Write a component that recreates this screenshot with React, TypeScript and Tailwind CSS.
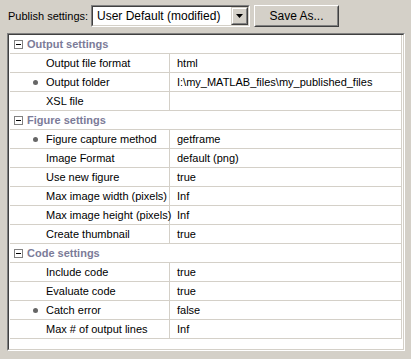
import React from "react";

type Row = { label: string; value: string; dot?: boolean };
type Section = { title: string; rows: Row[] };

const sections: Section[] = [
  {
    title: "Output settings",
    rows: [
      { label: "Output file format", value: "html" },
      { label: "Output folder", value: "I:\\my_MATLAB_files\\my_published_files", dot: true },
      { label: "XSL file", value: "" },
    ],
  },
  {
    title: "Figure settings",
    rows: [
      { label: "Figure capture method", value: "getframe", dot: true },
      { label: "Image Format", value: "default (png)" },
      { label: "Use new figure", value: "true" },
      { label: "Max image width (pixels)", value: "Inf" },
      { label: "Max image height (pixels)", value: "Inf" },
      { label: "Create thumbnail", value: "true" },
    ],
  },
  {
    title: "Code settings",
    rows: [
      { label: "Include code", value: "true" },
      { label: "Evaluate code", value: "true" },
      { label: "Catch error", value: "false", dot: true },
      { label: "Max # of output lines", value: "Inf" },
    ],
  },
];

function SectionHeader({ title }: { title: string }) {
  return (
    <div className="flex h-[19px] items-center border-b border-[#d4d0c8] pl-[4px]">
      <div className="flex h-[9px] w-[9px] items-center justify-center border border-[#808080] bg-white">
        <div className="h-px w-[5px] bg-black" />
      </div>
      <span className="ml-[4px] font-bold text-[#7b7b98]">{title}</span>
    </div>
  );
}

function PropRow({ row }: { row: Row }) {
  return (
    <div className="flex h-[19px] border-b border-[#d4d0c8]">
      <div className="relative flex w-[159px] items-center pl-[36px]">
        {row.dot && (
          <div className="absolute left-[23px] top-[7px] h-[5px] w-[5px] rounded-full bg-[#666]" />
        )}
        <span className="whitespace-nowrap">{row.label}</span>
      </div>
      <div className="flex flex-1 items-center border-l border-[#d4d0c8] pl-[7px]">
        <span className="whitespace-nowrap">{row.value}</span>
      </div>
    </div>
  );
}

export default function App() {
  return (
    <div
      className="h-[359px] w-[411px] overflow-hidden bg-[#d4d0c8] text-[11px] leading-none text-black"
      style={{ fontFamily: '"Liberation Sans", Arial, sans-serif' }}
    >
      <div className="flex h-[22px] items-center pl-[8px] pt-0 mt-[5px]">
        <span className="w-[83px]">Publish settings:</span>
        <div className="flex h-[22px] w-[159px] border border-t-[#808080] border-l-[#808080] border-b-white border-r-white">
          <div className="flex flex-1 items-center border border-t-[#404040] border-l-[#404040] border-b-[#d4d0c8] border-r-[#d4d0c8] bg-white">
            <span className="flex-1 pl-[4px] text-[12px]">User Default (modified)</span>
            <div className="flex h-[18px] w-[17px] border border-t-[#d4d0c8] border-l-[#d4d0c8] border-b-[#404040] border-r-[#404040]">
              <div className="flex flex-1 items-center justify-center border border-t-white border-l-white border-b-[#808080] border-r-[#808080] bg-[#d4d0c8]">
                <svg width="7" height="4" viewBox="0 0 7 4">
                  <path d="M0 0h7L3.5 4z" fill="#000" />
                </svg>
              </div>
            </div>
          </div>
        </div>
        <div className="ml-[4px] flex h-[22px] w-[85px] border border-t-white border-l-white border-b-[#404040] border-r-[#404040]">
          <div className="flex flex-1 items-center justify-center border border-t-[#d4d0c8] border-l-[#d4d0c8] border-b-[#808080] border-r-[#808080] text-[12px]">
            Save As...
          </div>
        </div>
      </div>

      <div className="ml-[7px] mt-[6px] h-[318px] w-[398px] border border-t-[#808080] border-l-[#808080] border-b-white border-r-white">
        <div className="h-full border border-t-[#404040] border-l-[#404040] border-b-[#d4d0c8] border-r-[#d4d0c8] bg-white pl-px">
          <div className="w-[392px] border-r border-[#d4d0c8]">
            {sections.map((s) => (
              <div key={s.title}>
                <SectionHeader title={s.title} />
                {s.rows.map((r) => (
                  <PropRow key={r.label} row={r} />
                ))}
              </div>
            ))}
          </div>
        </div>
      </div>
    </div>
  );
}
